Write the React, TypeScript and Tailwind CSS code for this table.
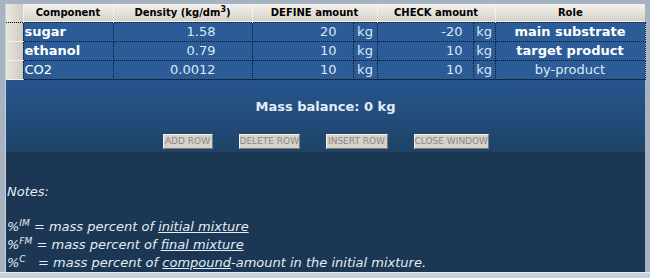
import React from "react"

type Row = {
  name: string
  density: string
  define: string
  check: string
  role: string
  bold: boolean
}

const rows: Row[] = [
  { name: "sugar", density: "1.58", define: "20", check: "-20", role: "main substrate", bold: true },
  { name: "ethanol", density: "0.79", define: "10", check: "10", role: "target product", bold: true },
  { name: "CO2", density: "0.0012", define: "10", check: "10", role: "by-product", bold: false },
]

const buttons = [
  { label: "ADD ROW", w: "w-[50px]" },
  { label: "DELETE ROW", w: "w-[61px]" },
  { label: "INSERT ROW", w: "w-[62px]" },
  { label: "CLOSE WINDOW", w: "w-[75px]" },
]

export default function App() {
  const cell = "border border-dotted border-[#0b1626] p-0 text-[13px] leading-[17px]"
  const head =
    "border-l border-dotted border-white p-0 text-[10px] font-bold text-black text-center leading-[17px]"

  return (
    <div
      className="w-[650px] h-[278px] bg-[#a7b3c1] flex flex-col overflow-hidden"
      style={{ fontFamily: '"DejaVu Sans", Verdana, sans-serif' }}
    >
      <div className="mx-[5px] mt-[4px] flex-1 flex flex-col bg-[#1b3753] border-l border-[#c6d0dc]">
        {/* Component table */}
        <table className="table-fixed border-collapse w-[639px]">
          <colgroup>
            <col className="w-[17px]" />
            <col className="w-[90px]" />
            <col className="w-[139px]" />
            <col className="w-[101px]" />
            <col className="w-[24px]" />
            <col className="w-[96px]" />
            <col className="w-[22px]" />
            <col className="w-[150px]" />
          </colgroup>
          <thead>
            <tr className="h-[18px] bg-gradient-to-b from-[#f4f2ee] to-[#d5d1c9] border-b border-dotted border-black">
              <th className="p-0 bg-gradient-to-r from-[#ebe8e2] to-[#d2cec6]" />
              <th className={head}>Component</th>
              <th className={head}>
                Density (kg/dm<sup className="text-[8px]">3</sup>)
              </th>
              <th className={head} colSpan={2}>
                DEFINE amount
              </th>
              <th className={head} colSpan={2}>
                CHECK amount
              </th>
              <th className={head}>Role</th>
            </tr>
          </thead>
          <tbody>
            {rows.map((r) => (
              <tr key={r.name} className="h-[19px] bg-[#2b5c98] text-white">
                <td className="p-0 bg-gradient-to-r from-[#e8e5de] to-[#cdc9c1] border-b border-[#f2f0ec]" />
                <td className={`${cell} pl-[1px] ${r.bold ? "font-bold" : ""}`}>{r.name}</td>
                <td className={`${cell} text-right pr-[36px] text-[#dde7f2]`}>{r.density}</td>
                <td className={`${cell} text-right pr-[16px] text-[#dde7f2]`}>{r.define}</td>
                <td className={`${cell} text-center text-[#dde7f2]`}>kg</td>
                <td className={`${cell} text-right pr-[10px] text-[#dde7f2]`}>{r.check}</td>
                <td className={`${cell} text-center text-[#dde7f2]`}>kg</td>
                <td className={`${cell} text-center ${r.bold ? "font-bold text-white" : "text-[#dde7f2]"}`}>
                  {r.role}
                </td>
              </tr>
            ))}
          </tbody>
        </table>

        {/* Balance and actions */}
        <div className="h-[72px] bg-gradient-to-b from-[#27568e] to-[#1e4368] flex flex-col items-center">
          <div className="mt-[18px] text-[13px] font-bold text-[#e3ecf6] leading-[18px]">
            Mass balance: 0 kg
          </div>
          <div className="mt-[18px] flex gap-[26px]">
            {buttons.map((b) => (
              <button
                key={b.label}
                type="button"
                className={`${b.w} h-[15px] bg-[#d6d2ca] border border-t-[#f4f2ee] border-l-[#f4f2ee] border-r-[#7e7a74] border-b-[#7e7a74] text-[9px] leading-[13px] text-[#8a8884] text-center whitespace-nowrap`}
              >
                {b.label}
              </button>
            ))}
          </div>
        </div>

        {/* Notes */}
        <div className="pt-[31px] pl-[1px] italic text-[13px] leading-[18px] text-[#e4ecf4]">
          <p>Notes:</p>
          <p className="h-[17px]" />
          <p>
            %<sup className="text-[9px]">IM</sup> = mass percent of{" "}
            <span className="underline">initial mixture</span>
          </p>
          <p>
            %<sup className="text-[9px]">FM</sup> = mass percent of{" "}
            <span className="underline">final mixture</span>
          </p>
          <p className="whitespace-pre">
            %<sup className="text-[9px]">C</sup>{"   "}= mass percent of{" "}
            <span className="underline">compound</span>-amount in the initial mixture.
          </p>
        </div>
      </div>
      <div className="h-[6px] bg-[#c3d0dd] border-t border-[#e4ecf4]" />
    </div>
  )
}
